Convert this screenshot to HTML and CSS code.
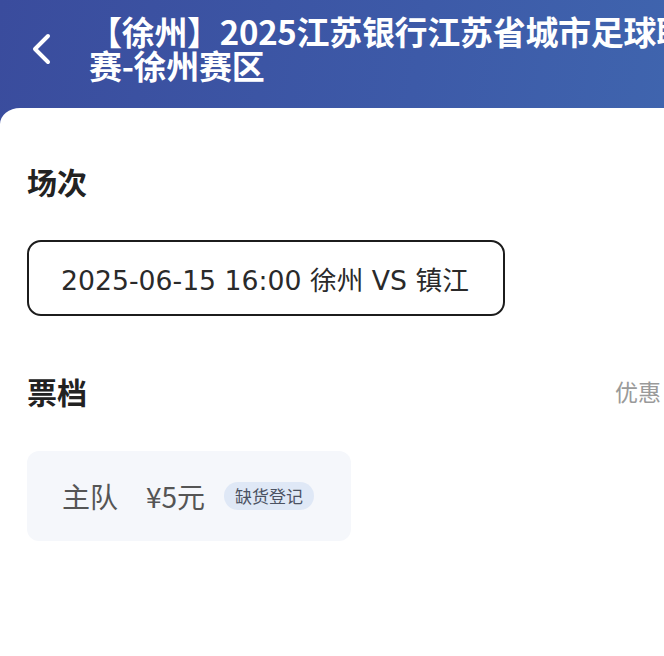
FILE: index.html
```html
<!DOCTYPE html>
<html lang="zh-CN">
<head>
<meta charset="utf-8">
<title>徐州赛区</title>
<link rel="stylesheet" href="styles.css">
</head>
<body>
<div class="page">
  <header class="header">
    <div class="back">
      <svg width="22" height="32" viewBox="0 0 22 32"><path d="M17 3 L4 16 L17 29" fill="none" stroke="#fff" stroke-width="4" stroke-linecap="round" stroke-linejoin="round"/></svg>
    </div>
    <h1 class="title">【徐州】2025江苏银行江苏省城市足球联赛-徐州赛区</h1>
  </header>
  <main class="panel">
    <h2 class="section-title">场次</h2>
    <div class="match">2025-06-15 16:00 徐州 VS 镇江</div>
    <div class="section-row">
      <h2 class="section-title">票档</h2>
      <span class="promo">优惠</span>
    </div>
    <div class="ticket">
      <span class="ticket-name">主队</span>
      <span class="ticket-price">¥5元</span>
      <span class="badge">缺货登记</span>
    </div>
  </main>
</div>
</body>
</html>
```
FILE: styles.css
```css
html, body {
  margin: 0;
  padding: 0;
}
body {
  width: 664px;
  height: 656px;
  overflow: hidden;
  background: #fff;
  font-family: "Noto Sans CJK SC", "Noto Sans", sans-serif;
}
.page {
  width: 664px;
  height: 656px;
  background: linear-gradient(100deg, #3a4c9d 0%, #3d5aa8 55%, #4068b0 100%);
  overflow: hidden;
}
.header {
  height: 108px;
  box-sizing: border-box;
  padding: 14px 0 0 31px;
  display: flex;
  align-items: flex-start;
}
.back {
  width: 22px;
  height: 70px;
  display: flex;
  align-items: center;
  flex: none;
}
.back svg {
  display: block;
}
.title {
  margin: 0 0 0 36px;
  width: 610px;
  flex: none;
  font-size: 33px;
  line-height: 34px;
  font-weight: 700;
  letter-spacing: -0.3px;
  color: #fff;
  word-break: break-all;
}
.panel {
  background: #fff;
  border-top-left-radius: 20px 16px;
  height: 548px;
  padding: 58px 0 0 27px;
  box-sizing: border-box;
}
.section-title {
  margin: 0;
  font-size: 30px;
  line-height: 30px;
  font-weight: 700;
  color: #222;
}
.match {
  margin-top: 44px;
  width: 478px;
  height: 76px;
  box-sizing: border-box;
  border: 2px solid #1c1c1c;
  border-radius: 14px;
  padding-left: 32px;
  display: flex;
  align-items: center;
  font-family: "DejaVu Sans", "Noto Sans CJK SC", sans-serif;
  font-size: 26.7px;
  color: #2a2a2a;
}
.section-row {
  margin-top: 58px;
  display: flex;
  justify-content: space-between;
  align-items: center;
  padding-right: 3px;
}
.promo {
  font-size: 23px;
  color: #9a9a9a;
}
.ticket {
  margin-top: 43px;
  width: 324px;
  height: 90px;
  box-sizing: border-box;
  background: #f5f7fb;
  border-radius: 12px;
  padding-left: 35px;
  display: flex;
  align-items: center;
  color: #555;
}
.ticket-name {
  font-size: 28px;
}
.ticket-price {
  font-size: 28px;
  margin-left: 28px;
}
.badge {
  margin-left: 19px;
  height: 28px;
  padding: 0 11px;
  border-radius: 14px;
  background: #dfe8f6;
  color: #4b5262;
  font-size: 17px;
  line-height: 28px;
}
```
